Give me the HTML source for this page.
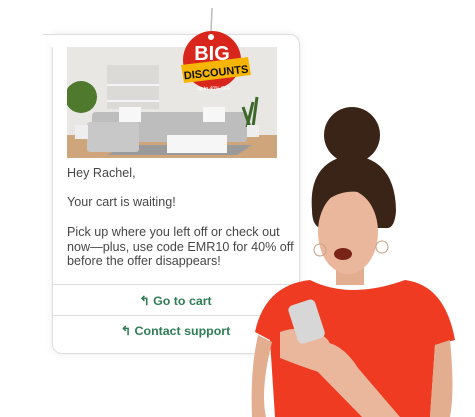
<!DOCTYPE html>
<html><head><style>
body{margin:0;width:475px;height:417px;background:#fff;position:relative;overflow:hidden;font-family:"Liberation Sans",sans-serif}
.card{position:absolute;left:52px;top:34px;width:246px;height:318px;background:#fff;border:1px solid #ddd;border-radius:0 10px 10px 10px;box-shadow:0 0 8px rgba(0,0,0,.08)}
.tail{position:absolute;left:42px;top:34px;width:12px;height:14px;background:#fff;border-top:1px solid #ddd;clip-path:polygon(0 0,100% 0,100% 100%)}
.txt{position:absolute;left:67px;top:166px;font-size:12.6px;color:#474747;line-height:14.7px}
.btn{position:absolute;left:53px;width:245px;text-align:center;color:#2e7d55;font-size:12.4px;font-weight:bold;border-top:1px solid #ddd}
</style></head><body>
<div class="card"></div><div class="tail"></div>
<svg style="position:absolute;left:67px;top:47px" width="210" height="111">
<rect width="210" height="111" fill="#e9e7e4"/>
<rect y="88" width="210" height="23" fill="#cfa67c"/>
<rect x="40" y="18" width="52" height="44" fill="#dcdad6"/>
<rect x="40" y="37" width="52" height="2" fill="#f4f4f4"/><rect x="40" y="53" width="52" height="2" fill="#f4f4f4"/>
<path d="M40 108 L170 108 L185 98 L60 98Z" fill="#9a9a9a"/>
<rect x="25" y="65" width="155" height="30" rx="4" fill="#bdbdbd"/>
<rect x="20" y="75" width="52" height="30" rx="3" fill="#c8c8c8"/>
<rect x="100" y="88" width="60" height="18" fill="#f6f6f6"/>
<rect x="52" y="60" width="22" height="15" fill="#f7f7f7"/><rect x="136" y="60" width="22" height="15" fill="#f7f7f7"/>
<circle cx="14" cy="50" r="16" fill="#4f7a2e"/><rect x="8" y="78" width="13" height="14" fill="#eee"/>
<path d="M180 80 L186 55 M186 80 L190 50 M183 80 L176 60" stroke="#3d6a2a" stroke-width="3"/><rect x="180" y="78" width="12" height="12" fill="#eee"/>
</svg>
<svg style="position:absolute;left:178px;top:8px" width="80" height="100">
<line x1="34" y1="0" x2="33" y2="26" stroke="#bbb" stroke-width="1.5"/>
<circle cx="34" cy="52" r="29" fill="#d8261c"/>
<circle cx="33" cy="29" r="3" fill="#fff"/>
<text x="34" y="52" text-anchor="middle" font-family="Liberation Sans" font-weight="bold" font-size="20" fill="#fff">BIG</text>
<polygon points="3,57 70,49 73,67 6,75" fill="#f7b500"/>
<text x="38" y="68" text-anchor="middle" font-family="Liberation Sans" font-weight="bold" font-size="11" fill="#111" transform="rotate(-6 38 64)">DISCOUNTS</text>
<text x="36" y="82" text-anchor="middle" font-size="5" fill="#fff">up to 40% OFF</text>
</svg>
<div class="txt">Hey Rachel,<br><br>Your cart is waiting!<br><br>Pick up where you left off or check out<br>now—plus, use code EMR10 for 40% off<br>before the offer disappears!</div>
<div class="btn" style="top:284px;height:31px;line-height:33px">&#x21b0; Go to cart</div>
<div class="btn" style="top:315px;height:30px;line-height:30px">&#x21b0; Contact support</div>
<svg style="position:absolute;left:250px;top:100px" width="225" height="317">
<circle cx="102" cy="35" r="28" fill="#3a2418"/>
<path d="M62 110 Q58 62 100 55 Q145 58 146 110 Q145 130 135 128 L70 128 Q62 125 62 110Z" fill="#3a2418"/>
<rect x="86" y="155" width="28" height="30" fill="#e3ad90"/>
<ellipse cx="98" cy="132" rx="30" ry="42" fill="#eab79d"/>
<path d="M68 108 Q95 80 132 100 L132 92 Q95 70 64 100Z" fill="#3a2418"/>
<ellipse cx="93" cy="154" rx="9" ry="6" fill="#7a2418"/>
<circle cx="70" cy="150" r="6" fill="none" stroke="#c9a080" stroke-width="1"/>
<circle cx="132" cy="147" r="6" fill="none" stroke="#c9a080" stroke-width="1"/>
<path d="M5 232 Q15 185 60 180 Q100 200 155 180 Q195 185 205 240 L185 245 L180 317 L25 317 L20 240Z" fill="#ee3b22"/>
<path d="M8 235 L22 242 Q10 290 16 317 L2 317 Q0 270 8 235Z" fill="#e3ad90"/>
<path d="M185 245 L200 240 Q205 290 200 317 L180 317Z" fill="#e3ad90"/>
<path d="M30 232 Q60 222 78 240 Q90 262 88 278 Q60 270 30 258Z" fill="#eab79d"/>
<rect x="42" y="202" width="28" height="40" rx="5" fill="#d7d7d7" transform="rotate(-18 55 220)"/>
<path d="M58 242 Q88 236 108 268 L150 317 L112 317 L68 272Z" fill="#eab79d"/>
</svg>
</body></html>
